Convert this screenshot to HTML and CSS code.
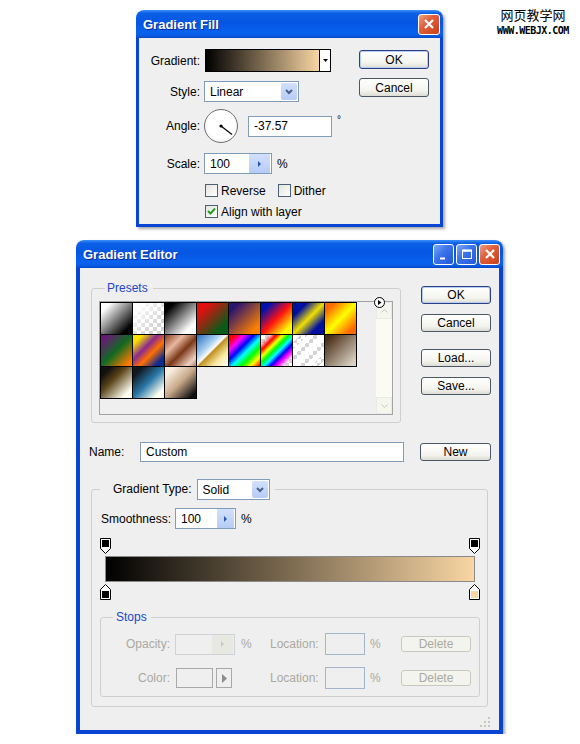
FILE: index.html
```html
<!DOCTYPE html>
<html>
<head>
    <meta charset="utf-8">
    <title>Gradient Editor</title>
    <link rel="stylesheet" href="styles.css">
</head>
<body>
    <div class="mark">
        <div class="mark-cn">网页教学网</div>
        <div class="mark-url">WWW.WEBJX.COM</div>
    </div>

    <div class="win win-fill">
        <div class="titlebar">
            <span class="title">Gradient Fill</span>
            <span class="tb-btn tb-close"><svg width="12" height="12" viewBox="0 0 12 12"><path d="M2 2L10 10M10 2L2 10" stroke="#fff" stroke-width="2.2"/></svg></span>
        </div>
        <div class="body fill-body">
            <div class="fill-form">
                <div class="frow frow-grad">
                    <span class="lbl">Gradient:</span>
                    <div class="grad-pick">
                        <div class="grad-strip"></div>
                        <div class="grad-drop"><svg width="5" height="3" viewBox="0 0 5 3"><path d="M0 0H5L2.5 3Z" fill="#000"/></svg></div>
                    </div>
                </div>
                <div class="frow frow-style">
                    <span class="lbl">Style:</span>
                    <div class="field select sel-style"><span class="val">Linear</span><span class="sel-btn"><svg width="8" height="6" viewBox="0 0 8 6"><path d="M1 1L4 4L7 1" stroke="#4d6185" stroke-width="2" fill="none"/></svg></span></div>
                </div>
                <div class="frow frow-angle">
                    <span class="lbl">Angle:</span>
                    <div class="dial"><svg width="34" height="34" viewBox="0 0 34 34"><circle cx="17" cy="17" r="1.6" fill="#000"/><path d="M17 17L28 25.5" stroke="#000" stroke-width="1.2"/></svg></div>
                    <div class="field angle-in">-37.57</div>
                    <span class="deg">°</span>
                </div>
                <div class="frow frow-scale">
                    <span class="lbl">Scale:</span>
                    <div class="field spin scale-in"><span class="val">100</span><span class="spin-btn"><svg width="3" height="6" viewBox="0 0 3 6"><path d="M0 0L3 3L0 6Z" fill="#2a56b0"/></svg></span></div>
                    <span class="unit">%</span>
                </div>
                <div class="frow frow-check">
                    <span class="cb"></span><span class="cb-txt">Reverse</span>
                    <span class="cb cb-gap"></span><span class="cb-txt">Dither</span>
                </div>
                <div class="frow frow-check frow-check2">
                    <span class="cb"><svg width="11" height="11" viewBox="0 0 11 11"><path d="M2 5L4.5 7.5L9 2.5" stroke="#21a121" stroke-width="2" fill="none"/></svg></span><span class="cb-txt">Align with layer</span>
                </div>
            </div>
            <div class="fill-btns">
                <div class="btn btn-def">OK</div>
                <div class="btn">Cancel</div>
            </div>
        </div>
    </div>

    <div class="win win-editor">
        <div class="titlebar">
            <span class="title">Gradient Editor</span>
            <div class="tb-btns">
                <span class="tb-btn tb-blue"><svg width="12" height="12" viewBox="0 0 12 12"><path d="M2 10.5H7" stroke="#fff" stroke-width="2"/></svg></span>
                <span class="tb-btn tb-blue"><svg width="12" height="12" viewBox="0 0 12 12"><rect x="1.5" y="2" width="9" height="8.5" fill="none" stroke="#fff" stroke-width="1"/><path d="M1.5 2.8H10.5" stroke="#fff" stroke-width="2"/></svg></span>
                <span class="tb-btn tb-close"><svg width="12" height="12" viewBox="0 0 12 12"><path d="M2 2L10 10M10 2L2 10" stroke="#fff" stroke-width="2.2"/></svg></span>
            </div>
        </div>
        <div class="body ed-body">
            <div class="ed-top">
                <fieldset class="group presets">
                    <legend class="leg-presets">Presets</legend>
                    <span class="menu-arrow"><svg width="11" height="11" viewBox="0 0 11 11"><circle cx="5.5" cy="5.5" r="5" fill="#fff" stroke="#000"/><path d="M4 3L7.5 5.5L4 8Z" fill="#000"/></svg></span>
                    <div class="plist">
                        <div class="sw-grid">
                            <span class="sw g1"></span><span class="sw g2"></span><span class="sw g3"></span><span class="sw g4"></span>
                            <span class="sw g5"></span><span class="sw g6"></span><span class="sw g7"></span><span class="sw g8"></span>
                            <span class="sw g9"></span><span class="sw g10"></span><span class="sw g11"></span><span class="sw g12"></span>
                            <span class="sw g13"></span><span class="sw g14"></span><span class="sw g15"></span><span class="sw g16"></span>
                            <span class="sw g17"></span><span class="sw g18"></span><span class="sw g19"></span>
                        </div>
                        <div class="vscroll">
                            <span class="sb-btn"><svg width="7" height="4" viewBox="0 0 7 4"><path d="M0.5 3.5L3.5 0.5L6.5 3.5" stroke="#c4c8c8" fill="none"/></svg></span>
                            <span class="sb-track"></span>
                            <span class="sb-btn"><svg width="7" height="4" viewBox="0 0 7 4"><path d="M0.5 0.5L3.5 3.5L6.5 0.5" stroke="#c4c8c8" fill="none"/></svg></span>
                        </div>
                    </div>
                </fieldset>
                <div class="ed-btns">
                    <div class="btn btn-def">OK</div>
                    <div class="btn">Cancel</div>
                    <div class="btn btn-load">Load...</div>
                    <div class="btn">Save...</div>
                </div>
            </div>

            <div class="name-row">
                <span class="name-lbl">Name:</span>
                <div class="field name-in">Custom</div>
                <div class="btn btn-new">New</div>
            </div>

            <fieldset class="group gtype">
                <legend class="leg-gtype">
                    <span>Gradient Type:</span>
                    <span class="field select sel-type"><span class="val">Solid</span><span class="sel-btn"><svg width="8" height="6" viewBox="0 0 8 6"><path d="M1 1L4 4L7 1" stroke="#4d6185" stroke-width="2" fill="none"/></svg></span></span>
                </legend>
                <div class="smooth-row">
                    <span class="smooth-lbl">Smoothness:</span>
                    <div class="field spin smooth-in"><span class="val">100</span><span class="spin-btn"><svg width="3" height="6" viewBox="0 0 3 6"><path d="M0 0L3 3L0 6Z" fill="#2a56b0"/></svg></span></div>
                    <span class="unit">%</span>
                </div>
                <div class="stop-row">
                    <svg width="11" height="16" viewBox="0 0 11 16"><path d="M0.5 0.5H10.5V10.5L5.5 15.5L0.5 10.5Z" fill="#fff" stroke="#000"/><rect x="2" y="2" width="7" height="7" fill="#000"/></svg>
                    <svg width="11" height="16" viewBox="0 0 11 16"><path d="M0.5 0.5H10.5V10.5L5.5 15.5L0.5 10.5Z" fill="#fff" stroke="#000"/><rect x="2" y="2" width="7" height="7" fill="#000"/></svg>
                </div>
                <div class="gbar"></div>
                <div class="stop-row stop-row-b">
                    <svg width="11" height="16" viewBox="0 0 11 16"><path d="M5.5 0.5L10.5 5.5V15.5H0.5V5.5Z" fill="#fff" stroke="#000"/><rect x="2" y="7" width="7" height="7" fill="#000"/></svg>
                    <svg width="11" height="16" viewBox="0 0 11 16"><path d="M5.5 0.5L10.5 5.5V15.5H0.5V5.5Z" fill="#fff" stroke="#000"/><rect x="2" y="7" width="7" height="7" fill="#f9d6a3"/></svg>
                </div>

                <fieldset class="group stops">
                    <legend class="leg-stops">Stops</legend>
                    <div class="s-row">
                        <span class="s-lbl">Opacity:</span>
                        <div class="s-ctl"><div class="field spin dis-spin"><span class="val"></span><span class="spin-btn"><svg width="3" height="6" viewBox="0 0 3 6"><path d="M0 0L3 3L0 6Z" fill="#c8c8c0"/></svg></span></div></div>
                        <span class="s-pct">%</span>
                        <span class="s-loc">Location:</span>
                        <div class="field s-in"></div>
                        <span class="s-pct2">%</span>
                        <div class="btn btn-dis">Delete</div>
                    </div>
                    <div class="s-row s-row2">
                        <span class="s-lbl">Color:</span>
                        <div class="s-ctl"><span class="color-box"></span><span class="color-arrow"><svg width="5" height="9" viewBox="0 0 5 9"><path d="M0 0L5 4.5L0 9Z" fill="#8c8c8c"/></svg></span></div>
                        <span class="s-pct"></span>
                        <span class="s-loc">Location:</span>
                        <div class="field s-in"></div>
                        <span class="s-pct2">%</span>
                        <div class="btn btn-dis">Delete</div>
                    </div>
                </fieldset>
            </fieldset>

            <div class="ed-foot">
                <svg class="grip" width="11" height="11" viewBox="0 0 11 11">
                    <rect x="8" y="0" width="2" height="2" fill="#c9c7ba"/>
                    <rect x="4" y="4" width="2" height="2" fill="#c9c7ba"/><rect x="8" y="4" width="2" height="2" fill="#c9c7ba"/>
                    <rect x="0" y="8" width="2" height="2" fill="#c9c7ba"/><rect x="4" y="8" width="2" height="2" fill="#c9c7ba"/><rect x="8" y="8" width="2" height="2" fill="#c9c7ba"/>
                </svg>
            </div>
        </div>
    </div>
</body>
</html>
```

FILE: styles.css
```css
* {
    box-sizing: border-box;
}
body {
    margin: 0;
    background: #fff;
    font-family: "Liberation Sans", Arial, sans-serif;
    font-size: 12px;
    color: #000;
    position: relative;
}

/* watermark */
.mark {
    position: absolute;
    top: 6px;
    left: 497px;
    width: 72px;
    text-align: center;
}
.mark-cn {
    font-family: "Noto Sans CJK SC", sans-serif;
    font-size: 13px;
    line-height: 17px;
}
.mark-url {
    font-family: "DejaVu Sans Mono", monospace;
    font-weight: bold;
    font-size: 10px;
    letter-spacing: -0.5px;
    line-height: 11px;
    margin-top: 2px;
}

/* windows */
.win {
    border-radius: 8px 8px 0 0;
    box-shadow: 2px 2px 3px rgba(0, 0, 0, 0.35);
}
.win-fill {
    width: 307px;
    margin: 10px 0 0 136px;
}
.win-editor {
    width: 427px;
    margin: 13px 0 0 76px;
}
.titlebar {
    height: 28px;
    display: flex;
    align-items: center;
    padding: 0 3px 0 7px;
    border-radius: 8px 8px 0 0;
    background: linear-gradient(180deg, #3d8ff8 0%, #0b5fe6 12%, #0556e2 45%, #0862ee 80%, #0a5ae0 92%, #0846c8 100%);
}
.title {
    flex: 1;
    color: #fff;
    font-weight: bold;
    font-size: 13px;
    text-shadow: 1px 1px 0 #0b2a9a;
}
.tb-btns {
    display: flex;
    gap: 2px;
}
.tb-btn {
    width: 21px;
    height: 21px;
    border: 1px solid #fff;
    border-radius: 3px;
    display: flex;
    align-items: center;
    justify-content: center;
}
.win-fill .tb-btn {
    width: 22px;
}
.tb-close {
    background: linear-gradient(135deg, #f0a088 0%, #e0603a 40%, #c8401a 100%);
}
.tb-blue {
    background: linear-gradient(135deg, #7aa8f8 0%, #3a72e8 45%, #2458d8 100%);
}
.body {
    background: #efefef;
    border: solid #0a44d2;
    border-width: 0 3px 3px;
}
.win-editor .body {
    border-width: 0 4px 4px;
}

/* common controls */
.field {
    height: 21px;
    border: 1px solid #7f9db9;
    background: #fff;
    display: flex;
    align-items: center;
    padding-left: 5px;
    flex: none;
}
.field .val {
    flex: 1;
}
.select, .spin {
    padding-right: 1px;
}
.sel-btn, .spin-btn {
    width: 16px;
    height: 17px;
    display: flex;
    align-items: center;
    justify-content: center;
    background: linear-gradient(180deg, #d2e0fc, #b6ccf6);
    border-radius: 2px;
}
.spin-btn {
    width: 21px;
    height: 19px;
    border-radius: 0;
}
.btn {
    height: 18px;
    border: 1px solid #4a5866;
    border-radius: 3px;
    background: linear-gradient(180deg, #fff 0%, #f4f4ee 70%, #dcdcd4 100%);
    display: flex;
    align-items: center;
    justify-content: center;
    flex: none;
}
.btn-def {
    border-color: #2a3f86;
    box-shadow: inset 0 0 0 1px #b9cdf2;
}
.unit {
    margin-left: 5px;
}

/* gradient fill */
.fill-body {
    display: flex;
    height: 189px;
    padding-top: 11px;
}
.fill-form {
    width: 220px;
    flex: none;
}
.fill-btns {
    width: 70px;
    margin-top: 1px;
    display: flex;
    flex-direction: column;
    gap: 9px;
}
.fill-btns .btn {
    height: 19px;
}
.frow {
    display: flex;
    align-items: center;
}
.lbl {
    width: 61px;
    margin-right: 4px;
    text-align: right;
    flex: none;
}
.frow-grad {
    height: 23px;
}
.frow-style {
    height: 21px;
    margin-top: 9px;
}
.frow-angle {
    height: 34px;
    margin-top: 7px;
}
.frow-scale {
    height: 21px;
    margin-top: 10px;
}
.frow-check {
    height: 13px;
    margin-top: 10px;
    padding-left: 66px;
}
.frow-check2 {
    margin-top: 8px;
}
.grad-pick {
    width: 126px;
    height: 23px;
    margin-left: 1px;
    border: 1px solid #000;
    display: flex;
    background: #fff;
}
.grad-strip {
    flex: 1;
    background: linear-gradient(to right, #000, #f9d6a3);
    border-right: 1px solid #000;
}
.grad-drop {
    width: 10px;
    display: flex;
    align-items: center;
    justify-content: center;
}
.sel-style {
    width: 95px;
}
.dial {
    width: 34px;
    height: 34px;
    border-radius: 50%;
    border: 1px solid #6e6e6e;
    background: radial-gradient(circle at 50% 45%, #fff 55%, #e2e2e2 100%);
    flex: none;
}
.dial svg {
    display: block;
    margin: -1px;
}
.angle-in {
    width: 84px;
    margin-left: 10px;
}
.deg {
    align-self: flex-start;
    margin: 5px 0 0 5px;
    font-size: 10px;
}
.scale-in {
    width: 68px;
}
.cb {
    width: 13px;
    height: 13px;
    border: 1px solid #4a5f78;
    background: linear-gradient(135deg, #e4e4de, #fff);
    flex: none;
    display: flex;
    align-items: center;
    justify-content: center;
}
.cb-txt {
    margin-left: 3px;
}
.cb-gap {
    margin-left: 12px;
}

/* gradient editor */
.ed-body {
    height: 466px;
    padding: 13px 8px 0 11px;
}
.ed-top {
    display: flex;
}
.group {
    margin: 0;
    border: 1px solid #cfcfcf;
    border-radius: 3px;
    min-width: 0;
}
.group legend {
    color: #2146c8;
    line-height: 14px;
}
.presets {
    position: relative;
    width: 310px;
    padding: 6px 7px 7px 7px;
}
.leg-presets {
    margin-left: 6px;
    padding: 0 5px 0 2px;
}
.menu-arrow {
    position: absolute;
    top: 2px;
    right: 15px;
    line-height: 0;
    background: #efefef;
}
.plist {
    width: 294px;
    height: 114px;
    border: 1px solid #a3a3a3;
    display: flex;
}
.sw-grid {
    flex: 1;
    display: grid;
    grid-template-columns: repeat(8, 32px);
    grid-auto-rows: 32px;
    align-content: start;
}
.sw {
    width: 33px;
    height: 33px;
    border: 1px solid #000;
}
.vscroll {
    width: 16px;
    display: flex;
    flex-direction: column;
    background: #fbfbf4;
}
.sb-btn {
    height: 17px;
    display: flex;
    align-items: center;
    justify-content: center;
    border: 1px solid #e8ece8;
    background: #f6f6ee;
}
.sb-track {
    flex: 1;
}
.ed-btns {
    width: 70px;
    margin-left: 20px;
    padding-top: 5px;
    display: flex;
    flex-direction: column;
    gap: 10px;
}
.btn-load {
    margin-top: 7px;
}

.name-row {
    display: flex;
    align-items: center;
    height: 20px;
    margin: 19px 0 0 -2px;
}
.name-lbl {
    width: 51px;
}
.name-in {
    width: 264px;
    height: 20px;
}
.btn-new {
    width: 71px;
    margin-left: 16px;
}

.gtype {
    width: 397px;
    margin-top: 17px;
    padding: 8px 7px 9px 8px;
}
.leg-gtype {
    display: flex;
    align-items: center;
    height: 21px;
    padding: 0 5px 0 13px;
}
.leg-gtype > span:first-child {
    color: #000;
    margin-right: 5px;
}
.group .leg-gtype {
    line-height: 21px;
}
.sel-type {
    width: 73px;
    color: #000;
    line-height: normal;
}
.smooth-row {
    display: flex;
    align-items: center;
    height: 21px;
    padding-left: 1px;
}
.smooth-lbl {
    width: 70px;
    margin-right: 4px;
}
.smooth-in {
    width: 61px;
}
.smooth-in .spin-btn {
    width: 17px;
}
.stop-row {
    display: flex;
    justify-content: space-between;
    height: 16px;
    margin-top: 9px;
}
.stop-row svg {
    display: block;
}
.stop-row-b {
    margin-top: 2px;
}
.gbar {
    height: 26px;
    margin: 2px 5px 0;
    border: 1px solid #8a8a8a;
    background: linear-gradient(to right, #000, #f9d6a3);
}

.stops {
    width: 380px;
    margin-top: 10px;
    padding: 9px 0 7px 0;
}
.leg-stops {
    margin-left: 12px;
    padding: 0 4px 0 3px;
}
.s-row {
    display: flex;
    align-items: center;
    height: 22px;
    color: #aaa9a0;
}
.s-row2 {
    margin-top: 12px;
}
.s-lbl {
    width: 69px;
    margin-right: 5px;
    text-align: right;
}
.s-ctl {
    width: 60px;
    display: flex;
    align-items: center;
}
.dis-spin {
    width: 60px;
    border-color: #cdd3d6;
    background: #efefef;
}
.dis-spin .spin-btn {
    background: #e8e8e2;
}
.s-pct {
    width: 35px;
    padding-left: 6px;
}
.s-loc {
    width: 55px;
}
.s-in {
    width: 40px;
    height: 22px;
    border-color: #a4b6cc;
    background: #efefef;
}
.s-pct2 {
    width: 36px;
    padding-left: 5px;
}
.btn-dis {
    width: 70px;
    height: 16px;
    border-color: #cac8bc;
    background: #f4f4ee;
    color: #aaa9a0;
}
.color-box {
    width: 37px;
    height: 20px;
    margin-left: 1px;
    border: 1px solid #a8a8a8;
}
.color-arrow {
    width: 16px;
    height: 20px;
    margin-left: 3px;
    border: 1px solid #a8a8a8;
    display: flex;
    align-items: center;
    justify-content: center;
}
.ed-foot {
    height: 22px;
    display: flex;
    justify-content: flex-end;
    align-items: flex-end;
    padding-bottom: 1px;
}

/* preset swatches */
.g1 { background: linear-gradient(135deg, #fff 15%, #000 85%); }
.g2 { background: linear-gradient(135deg, #fff 10%, rgba(255, 255, 255, 0) 75%), conic-gradient(#d4d4d4 25%, #fff 0 50%, #d4d4d4 0 75%, #fff 0) 0 0 / 8px 8px; }
.g3 { background: linear-gradient(135deg, #000 15%, #fff 80%); }
.g4 { background: linear-gradient(135deg, #e01010 20%, #0a5a18 80%); }
.g5 { background: linear-gradient(135deg, #2a1470 15%, #ff8000 85%); }
.g6 { background: linear-gradient(135deg, #0010b0 15%, #ff1010 50%, #ffff00 85%); }
.g7 { background: linear-gradient(135deg, #0010a0 22%, #f0e000 50%, #0010a0 78%); }
.g8 { background: linear-gradient(135deg, #ff6a00 15%, #ffff00 50%, #ff6a00 85%); }
.g9 { background: linear-gradient(135deg, #6a1878 10%, #106a20 50%, #ff7a00 90%); }
.g10 { background: linear-gradient(135deg, #f8e000 15%, #8a2a90 40%, #ff7000 60%, #102a90 85%); }
.g11 { background: linear-gradient(135deg, #8a3c1c 0%, #e8b8a0 30%, #7a3818 55%, #f0d0c0 85%, #b08070 100%); }
.g12 { background: linear-gradient(135deg, #2b6fc0 0%, #a8d0f0 35%, #fff 48%, #c09020 52%, #f8e8a0 75%, #fff 100%); }
.g13 { background: linear-gradient(135deg, #f00 10%, #f0f 25%, #00f 40%, #0ff 55%, #0f0 70%, #ff0 85%, #f00 100%); }
.g14 { background: linear-gradient(135deg, rgba(255, 0, 0, 0) 12%, #f00 25%, #ff0 35%, #0f0 45%, #0ff 55%, #00f 65%, #f0f 75%, rgba(255, 0, 255, 0) 88%), conic-gradient(#d4d4d4 25%, #fff 0 50%, #d4d4d4 0 75%, #fff 0) 0 0 / 8px 8px; }
.g15 { background: repeating-linear-gradient(135deg, rgba(255, 255, 255, 0.95) 0 5px, rgba(255, 255, 255, 0) 5px 10px), conic-gradient(#d4d4d4 25%, #fff 0 50%, #d4d4d4 0 75%, #fff 0) 0 0 / 8px 8px; }
.g16 { background: linear-gradient(135deg, #4a2e18 10%, #d8d0c0 90%); }
.g17 { background: linear-gradient(135deg, #101010 15%, #5a4418 40%, #fffef0 85%); }
.g18 { background: linear-gradient(135deg, #101820 15%, #2a78a8 50%, #fffff2 85%); }
.g19 { background: linear-gradient(135deg, #f8eee0 15%, #c8a888 50%, #101010 90%); }
```
